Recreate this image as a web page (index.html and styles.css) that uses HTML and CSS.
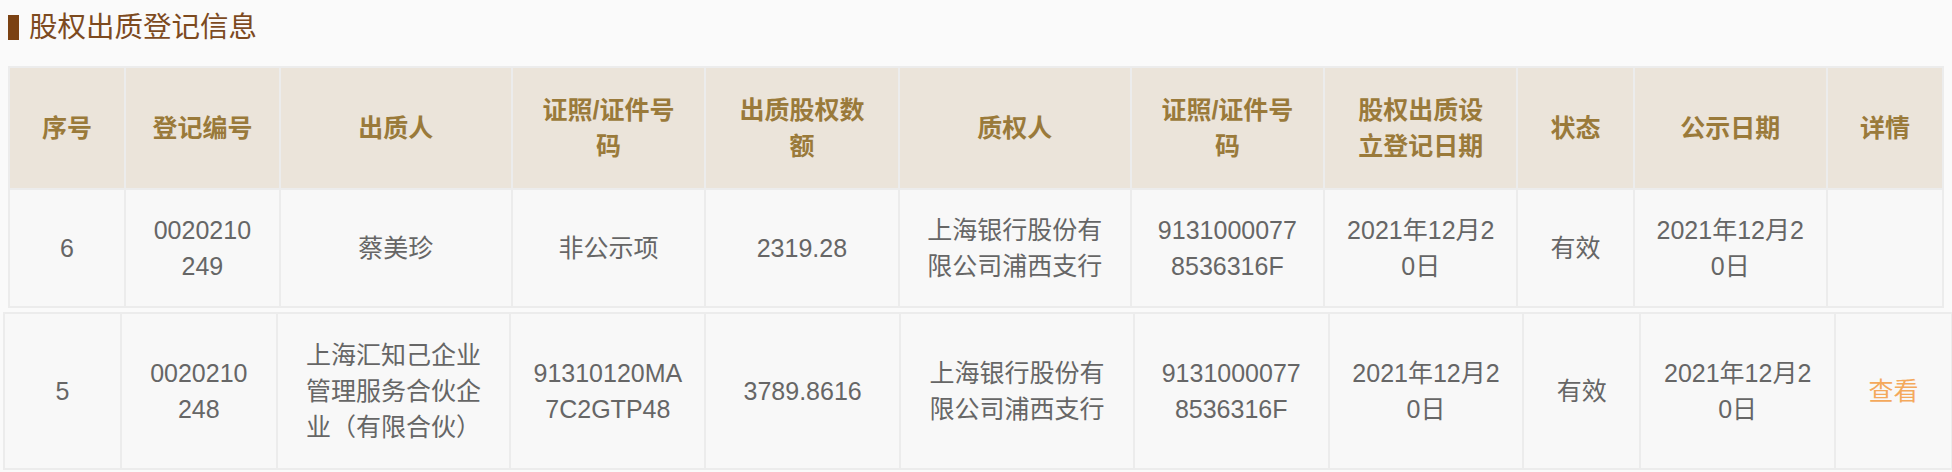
FILE: index.html
```html
<!DOCTYPE html>
<html lang="zh-CN">
<head>
<meta charset="utf-8">
<title>股权出质登记信息</title>
<link rel="stylesheet" href="styles.css">
</head>
<body>
<div class="page">
  <h2 class="section-title"><span class="title-bar"></span><span class="title-text">股权出质登记信息</span></h2>

  <table class="pledge-table first">
    <colgroup>
      <col class="c6"><col class="c8"><col class="c12"><col class="c10"><col class="c10"><col class="c12"><col class="c10"><col class="c10"><col class="c6"><col class="c10"><col class="c6">
    </colgroup>
    <thead>
      <tr>
        <th>序号</th>
        <th>登记编号</th>
        <th>出质人</th>
        <th>证照/证件号<br>码</th>
        <th>出质股权数<br>额</th>
        <th>质权人</th>
        <th>证照/证件号<br>码</th>
        <th>股权出质设<br>立登记日期</th>
        <th>状态</th>
        <th>公示日期</th>
        <th>详情</th>
      </tr>
    </thead>
    <tbody>
      <tr>
        <td>6</td>
        <td>0020210<br>249</td>
        <td>蔡美珍</td>
        <td>非公示项</td>
        <td>2319.28</td>
        <td>上海银行股份有<br>限公司浦西支行</td>
        <td>9131000077<br>8536316F</td>
        <td>2021年12月2<br>0日</td>
        <td>有效</td>
        <td>2021年12月2<br>0日</td>
        <td></td>
      </tr>
    </tbody>
  </table>

  <table class="pledge-table second">
    <colgroup>
      <col class="c6"><col class="c8"><col class="c12"><col class="c10"><col class="c10"><col class="c12"><col class="c10"><col class="c10"><col class="c6"><col class="c10"><col class="c6">
    </colgroup>
    <tbody>
      <tr>
        <td>5</td>
        <td>0020210<br>248</td>
        <td>上海汇知己企业<br>管理服务合伙企<br>业（有限合伙）</td>
        <td>91310120MA<br>7C2GTP48</td>
        <td>3789.8616</td>
        <td>上海银行股份有<br>限公司浦西支行</td>
        <td>9131000077<br>8536316F</td>
        <td>2021年12月2<br>0日</td>
        <td>有效</td>
        <td>2021年12月2<br>0日</td>
        <td><a class="detail-link" href="#">查看</a></td>
      </tr>
    </tbody>
  </table>
</div>
</body>
</html>
```

FILE: styles.css
```css
html, body {
  margin: 0;
  padding: 0;
  background: #fafafa;
  overflow: hidden;
}

body {
  font-family: "Liberation Sans", "Noto Sans CJK SC", sans-serif;
  color: #666666;
}

.page {
  display: flex;
  flex-direction: column;
  padding-top: 7px;
}

.section-title {
  display: flex;
  align-items: center;
  gap: 10px;
  height: 40px;
  margin: 0 0 19px 8px;
  font-weight: normal;
}

.title-bar {
  width: 11px;
  height: 25px;
  background: #7b4213;
}

.title-text {
  font-size: 28.5px;
  line-height: 40px;
  color: #7d4a1f;
}

.pledge-table {
  border-collapse: collapse;
  table-layout: fixed;
  font-size: 25px;
  line-height: 36px;
}

.pledge-table.first {
  width: 1936px;
  margin-left: 8px;
}

.pledge-table.second {
  width: 1950px;
  margin-left: 3px;
  margin-top: 4px;
}

.c6 { width: 6%; }
.c8 { width: 8%; }
.c10 { width: 10%; }
.c12 { width: 12%; }

.pledge-table th,
.pledge-table td {
  border: 2px solid #ececec;
  text-align: center;
  vertical-align: middle;
  padding: 22px 8px;
}

.pledge-table th {
  background: #ebe4da;
  color: #9a7a3a;
  font-weight: bold;
  padding: 24px 8px;
}

.pledge-table td {
  background: #f8f8f8;
  color: #666666;
}

.pledge-table.second td {
  padding: 23px 8px;
}

.detail-link {
  color: #f4a95c;
  text-decoration: none;
}
```
